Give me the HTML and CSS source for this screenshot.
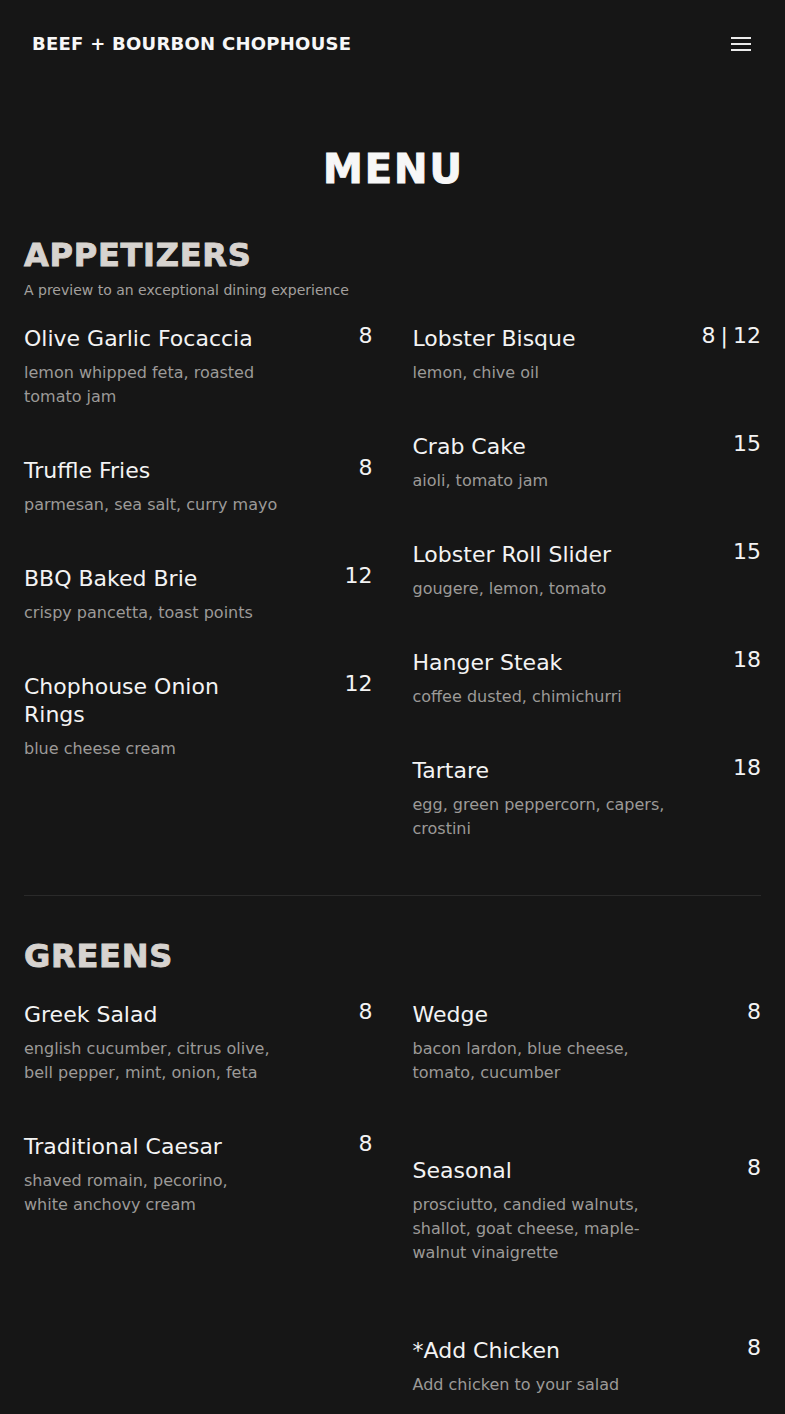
FILE: index.html
```html
<!DOCTYPE html>
<html lang="en">
<head>
<meta charset="utf-8">
<title>Menu | Beef + Bourbon Chophouse</title>
<link rel="stylesheet" href="styles.css">
</head>
<body>
<header class="site-header">
  <a class="brand" href="#">BEEF + BOURBON CHOPHOUSE</a>
  <button class="menu-toggle" aria-label="Open menu">
    <svg width="20" height="14" viewBox="0 0 20 14" aria-hidden="true">
      <rect x="0" y="0" width="20" height="2" fill="currentColor"/>
      <rect x="0" y="6" width="20" height="2" fill="currentColor"/>
      <rect x="0" y="12" width="20" height="2" fill="currentColor"/>
    </svg>
  </button>
</header>

<main class="menu">
  <h1 class="menu-title">MENU</h1>

  <section class="menu-section">
    <h2 class="section-title">APPETIZERS</h2>
    <p class="section-subtitle">A preview to an exceptional dining experience</p>
    <div class="columns">
      <div class="column">
        <div class="item">
          <div class="info"><h3 class="item-name">Olive Garlic Focaccia</h3><p class="item-desc">lemon whipped feta, roasted tomato jam</p></div>
          <span class="item-price">8</span>
        </div>
        <div class="item">
          <div class="info"><h3 class="item-name">Truffle Fries</h3><p class="item-desc">parmesan, sea salt, curry mayo</p></div>
          <span class="item-price">8</span>
        </div>
        <div class="item">
          <div class="info"><h3 class="item-name">BBQ Baked Brie</h3><p class="item-desc">crispy pancetta, toast points</p></div>
          <span class="item-price">12</span>
        </div>
        <div class="item">
          <div class="info"><h3 class="item-name">Chophouse Onion Rings</h3><p class="item-desc">blue cheese cream</p></div>
          <span class="item-price">12</span>
        </div>
      </div>
      <div class="column">
        <div class="item">
          <div class="info"><h3 class="item-name">Lobster Bisque</h3><p class="item-desc">lemon, chive oil</p></div>
          <span class="item-price">8 | 12</span>
        </div>
        <div class="item">
          <div class="info"><h3 class="item-name">Crab Cake</h3><p class="item-desc">aioli, tomato jam</p></div>
          <span class="item-price">15</span>
        </div>
        <div class="item">
          <div class="info"><h3 class="item-name">Lobster Roll Slider</h3><p class="item-desc">gougere, lemon, tomato</p></div>
          <span class="item-price">15</span>
        </div>
        <div class="item">
          <div class="info"><h3 class="item-name">Hanger Steak</h3><p class="item-desc">coffee dusted, chimichurri</p></div>
          <span class="item-price">18</span>
        </div>
        <div class="item">
          <div class="info"><h3 class="item-name">Tartare</h3><p class="item-desc">egg, green peppercorn, capers, crostini</p></div>
          <span class="item-price">18</span>
        </div>
      </div>
    </div>
  </section>

  <hr class="divider">

  <section class="menu-section">
    <h2 class="section-title section-title--spaced">GREENS</h2>
    <div class="columns">
      <div class="column">
        <div class="item">
          <div class="info"><h3 class="item-name">Greek Salad</h3><p class="item-desc">english cucumber, citrus olive, bell pepper, mint, onion, feta</p></div>
          <span class="item-price">8</span>
        </div>
        <div class="item">
          <div class="info"><h3 class="item-name">Traditional Caesar</h3><p class="item-desc">shaved romain, pecorino,<br>white anchovy cream</p></div>
          <span class="item-price">8</span>
        </div>
      </div>
      <div class="column">
        <div class="item">
          <div class="info"><h3 class="item-name">Wedge</h3><p class="item-desc item-desc--extra">bacon lardon, blue cheese, tomato, cucumber</p></div>
          <span class="item-price">8</span>
        </div>
        <div class="item">
          <div class="info"><h3 class="item-name">Seasonal</h3><p class="item-desc item-desc--extra">prosciutto, candied walnuts, shallot, goat cheese, maple-walnut vinaigrette</p></div>
          <span class="item-price">8</span>
        </div>
        <div class="item">
          <div class="info"><h3 class="item-name">*Add Chicken</h3><p class="item-desc">Add chicken to your salad</p></div>
          <span class="item-price">8</span>
        </div>
      </div>
    </div>
  </section>
</main>
</body>
</html>
```
FILE: styles.css
```css
* { box-sizing: border-box; }

html, body {
  margin: 0;
  padding: 0;
  background: #161616;
}

body {
  font-family: "DejaVu Sans", "Noto Sans", sans-serif;
  color: #f2f2f2;
}

/* Header */
.site-header {
  height: 88px;
  display: flex;
  align-items: center;
  justify-content: space-between;
  padding: 0 34px 0 32px;
}

.brand {
  font-family: "DejaVu Sans", sans-serif;
  font-weight: 700;
  font-size: 18px;
  letter-spacing: 0.26px;
  color: #f7f7f7;
  text-decoration: none;
  line-height: 1;
}

.menu-toggle {
  background: none;
  border: 0;
  padding: 0;
  color: #ececec;
  display: flex;
  cursor: pointer;
}

/* Main */
.menu {
  padding: 0 24px;
}

.menu-title {
  margin: 57px 0 44px;
  text-align: center;
  font-family: "DejaVu Sans", sans-serif;
  font-weight: 700;
  font-size: 40px;
  line-height: 48px;
  letter-spacing: 2px;
  padding-left: 2px;
  color: #f7f7f7;
  -webkit-text-stroke: 1px #f7f7f7;
}

.section-title {
  margin: 0;
  font-family: "DejaVu Sans", sans-serif;
  font-weight: 700;
  font-size: 32px;
  line-height: 36px;
  letter-spacing: 0.75px;
  color: #d7d3cf;
  -webkit-text-stroke: 0.9px #d7d3cf;
}

.section-title--spaced {
  margin-bottom: 27px;
}

.section-subtitle {
  margin: 7px 0 25px;
  font-size: 14px;
  line-height: 20px;
  color: #a3a09e;
}

.columns {
  display: grid;
  grid-template-columns: 1fr 1fr;
  column-gap: 40px;
  align-items: start;
}

.item {
  display: flex;
  justify-content: space-between;
  align-items: flex-start;
  margin-bottom: 48px;
}

.info {
  width: 79%;
}

.item-name {
  max-width: 92%;
  margin: 0 0 8px;
  font-weight: 400;
  font-size: 22px;
  line-height: 28px;
  color: #f3f3f3;
}

.item-desc {
  margin: 0;
  font-size: 16px;
  line-height: 24px;
  color: #9c9a98;
}

.item-desc--extra {
  padding-bottom: 24px;
}

.item-price {
  font-size: 22px;
  line-height: 22px;
  word-spacing: -2px;
  color: #f3f3f3;
  white-space: nowrap;
}

.divider {
  margin: 6px 0 42px;
  border: 0;
  border-top: 1px solid #2a2a2a;
  height: 0;
}
```
